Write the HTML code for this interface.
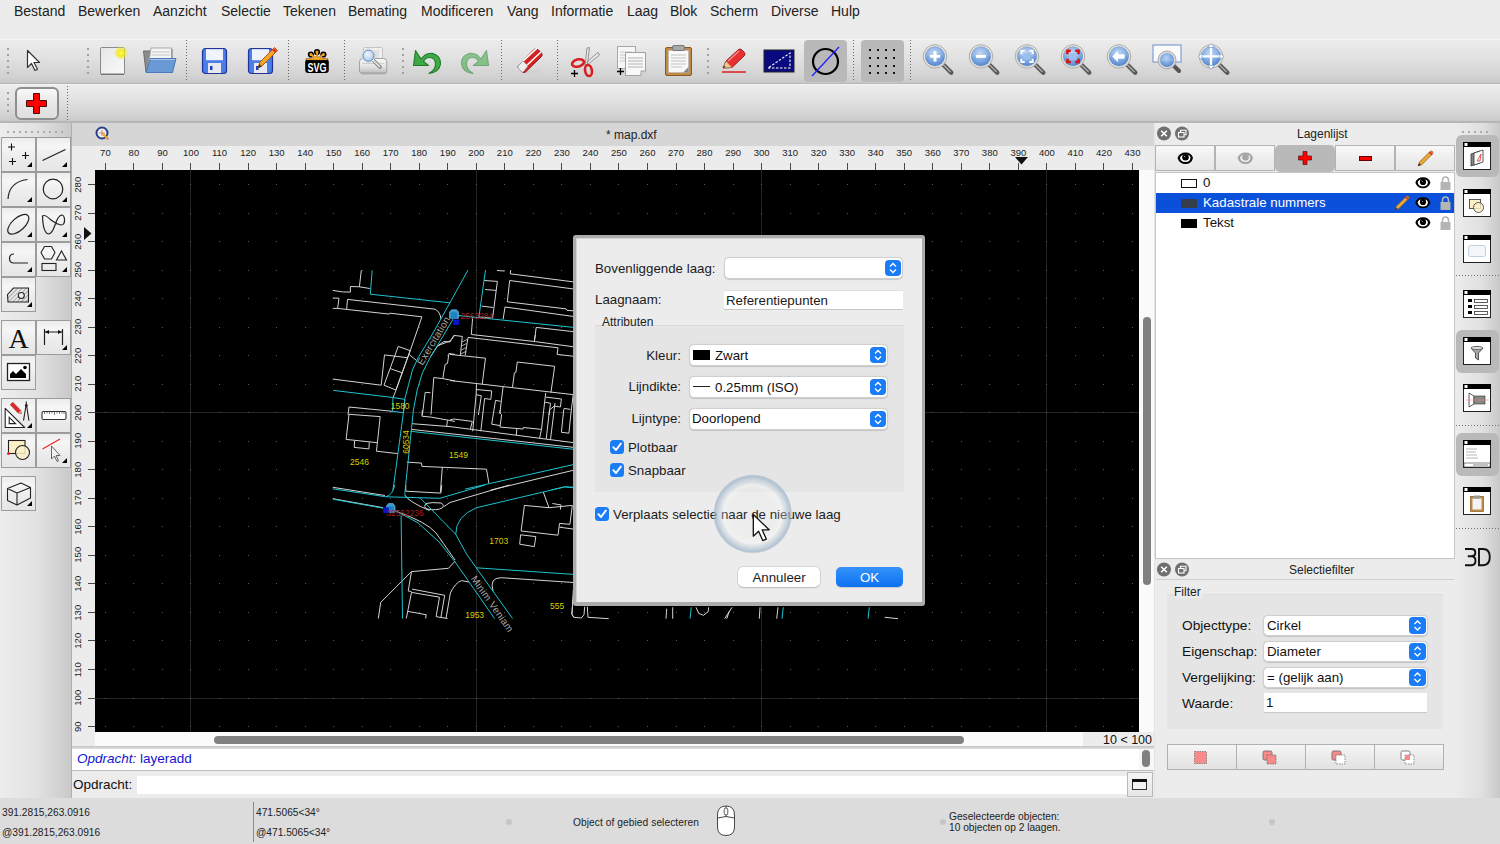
<!DOCTYPE html>
<html><head><meta charset="utf-8">
<style>
*{margin:0;padding:0;box-sizing:border-box}
html,body{width:1500px;height:844px;overflow:hidden;background:#ececec;font-family:"Liberation Sans",sans-serif;color:#1e1e1e}
.a{position:absolute}
.t{position:absolute;white-space:nowrap;line-height:1}
.rl{font-size:9.5px;color:#222}
#menu{left:0;top:0;width:1500px;height:39px;background:#ececec}
#menu .t{top:4px;font-size:14px;color:#222}
#tb1{left:0;top:39px;width:1500px;height:45px;background:linear-gradient(#ececec,#e2e2e2 40%,#d2d2d2 85%,#c8c8c8);border-top:1px solid #f6f6f6;border-bottom:1px solid #b6b6b6}
#tb2{left:0;top:84px;width:1500px;height:39px;background:linear-gradient(#ececec,#e2e2e2 40%,#d2d2d2 85%,#c8c8c8);border-top:1px solid #f4f4f4;border-bottom:2px solid #b6b6b6}
.hd{width:2px;background:linear-gradient(#a2a2a2 2px,transparent 2px) 0 0/2px 6px}
.sp{width:1px;background:linear-gradient(#6a6a6a 50%,transparent 50%) 0 0/1px 3px}
#ldock{left:0;top:123px;width:71px;height:675px;background:linear-gradient(90deg,#ededed,#e2e2e2 50%,#c9c9c9)}
.tbtn{position:absolute;width:35px;height:35px;border:1px solid #9c9c9c;background:linear-gradient(#ececec,#f6f6f6 25%,#ececec 60%,#e6e6e6)}
.tbtn svg{position:absolute;left:0;top:0}
#mdi{left:71px;top:123px;width:1084px;height:675px;background:#ececec;border-left:1px solid #b0b0b0}
#rdock{left:1154px;top:123px;width:301px;height:675px;background:#ececec;border-left:1px solid #e4e4e4}
#rtb{left:1455px;top:123px;width:45px;height:675px;background:linear-gradient(90deg,#ececec,#e0e0e0 60%,#c8c8c8)}
.lbtn{position:absolute;top:145px;width:60px;height:26px;border:1px solid #b4b4b4;background:linear-gradient(#f8f8f8,#eeeeee 50%,#e6e6e6)}
.lbl{font-size:13.7px;color:#111}
.cmb{position:absolute;background:#fff;border:1px solid #cfcfcf;border-radius:5px;box-shadow:0 0.5px 1px rgba(0,0,0,0.15)}
.cmb .t{font-size:13.3px;color:#111}
.stp{position:absolute;width:17px;height:17px;border-radius:4px;background:#1a7cf7;}
.sbtn{position:absolute;top:744px;width:70px;height:26px;border:1px solid #b0b0b0;background:linear-gradient(#f6f6f6,#ebebeb 50%,#e2e2e2)}
.st{font-size:10.2px;color:#222}
.dl{font-size:13.3px;color:#1b1b1b}
.chk{position:absolute;width:14px;height:14px;border-radius:3.5px;background:#1b7df6}
.chk svg{position:absolute;left:0;top:0}
#status{left:0;top:798px;width:1500px;height:46px;background:#dcdcdc;font-size:10px}
</style></head><body>
<div id="menu" class="a">
<span class="t" style="left:14px">Bestand</span>
<span class="t" style="left:78px">Bewerken</span>
<span class="t" style="left:153px">Aanzicht</span>
<span class="t" style="left:221px">Selectie</span>
<span class="t" style="left:283px">Tekenen</span>
<span class="t" style="left:348px">Bemating</span>
<span class="t" style="left:421px">Modificeren</span>
<span class="t" style="left:507px">Vang</span>
<span class="t" style="left:551px">Informatie</span>
<span class="t" style="left:627px">Laag</span>
<span class="t" style="left:670px">Blok</span>
<span class="t" style="left:710px">Scherm</span>
<span class="t" style="left:771px">Diverse</span>
<span class="t" style="left:831px">Hulp</span>
</div>
<div id="tb1" class="a"></div>
<div id="tb2" class="a"></div>
<!-- toolbar 1 handles/separators -->
<div class="a hd" style="left:7px;top:48px;height:26px"></div>
<div class="a hd" style="left:87px;top:48px;height:26px"></div>
<div class="a sp" style="left:186px;top:40px;height:42px"></div>
<div class="a sp" style="left:288px;top:40px;height:42px"></div>
<div class="a sp" style="left:344px;top:40px;height:42px"></div>
<div class="a hd" style="left:402px;top:48px;height:26px"></div>
<div class="a sp" style="left:501px;top:40px;height:42px"></div>
<div class="a sp" style="left:557px;top:40px;height:42px"></div>
<div class="a hd" style="left:707px;top:48px;height:26px"></div>
<div class="a sp" style="left:853px;top:40px;height:42px"></div>
<div class="a sp" style="left:910px;top:40px;height:42px"></div>
<!-- pointer -->
<svg class="a" style="left:26px;top:49px" width="16" height="24" viewBox="0 0 16 24"><path d="M1.5 1.5V18.5L5.5 14.5L9 21.5L11.5 20.3L8 13.5H13.5Z" fill="#fff" stroke="#333" stroke-width="1.2" stroke-linejoin="round"/></svg>
<!-- new doc -->
<svg class="a" style="left:98px;top:45px" width="32" height="32" viewBox="0 0 32 32"><defs><radialGradient id="glow"><stop offset="0" stop-color="#ffff60"/><stop offset="0.45" stop-color="#f2ea20"/><stop offset="1" stop-color="#f2ea20" stop-opacity="0"/></radialGradient><linearGradient id="pg" x1="0" x2="1" y1="0" y2="1"><stop offset="0" stop-color="#e6e6e6"/><stop offset="1" stop-color="#fafafa"/></linearGradient></defs><rect x="2.5" y="2.5" width="24" height="27" rx="1" fill="url(#pg)" stroke="#8a8a8a"/><rect x="3" y="28.5" width="23" height="1.5" fill="#777"/><circle cx="23" cy="8" r="7" fill="url(#glow)"/></svg>
<!-- open folder -->
<svg class="a" style="left:142px;top:46px" width="36" height="30" viewBox="0 0 36 30"><path d="M1.5 5H10L11.5 3H30V26H4Z" fill="#8c8c8c" stroke="#6a6a6a"/><path d="M9 2H29.5V22H6Z" fill="#f4f4f4" stroke="#999" stroke-width="0.8"/><path d="M10 6H28M9.5 9H28" stroke="#bbb" stroke-width="0.8"/><path d="M4 26.5L8.5 12.5H34L30.5 26.5Z" fill="#6a9ad6" stroke="#4a78b8"/><path d="M8.5 13.5H33" stroke="#a9c6ec" stroke-width="1"/></svg>
<!-- save -->
<svg class="a" style="left:201px;top:47px" width="28" height="28" viewBox="0 0 28 28"><rect x="1.5" y="1.5" width="24" height="25" rx="3" fill="#4a7ee8" stroke="#23339a" stroke-width="1.2"/><rect x="5" y="2.2" width="17" height="11" fill="#eef2fb"/><path d="M6 3L21 12" stroke="#fff" stroke-width="2" opacity="0.6"/><rect x="7" y="16" width="13" height="10" fill="#e8e8ee"/><rect x="9" y="19" width="2.5" height="4" fill="#1c3fc0"/></svg>
<!-- save as -->
<svg class="a" style="left:247px;top:45px" width="32" height="30" viewBox="0 0 32 30"><rect x="1.5" y="3.5" width="24" height="25" rx="3" fill="#4a7ee8" stroke="#23339a" stroke-width="1.2"/><rect x="5" y="4.2" width="17" height="11" fill="#eef2fb"/><rect x="7" y="18" width="13" height="10" fill="#e8e8ee"/><rect x="9" y="21" width="2.5" height="4" fill="#1c3fc0"/><path d="M11 23L13 17L27.5 2.5L30.5 5.5L16 20Z" fill="#f5a623" stroke="#b5541a" stroke-width="1"/><path d="M26 4L29 7" stroke="#e03030" stroke-width="2.5"/><path d="M11 23L12.3 19L15 21.7Z" fill="#333"/></svg>
<!-- SVG -->
<svg class="a" style="left:304px;top:48px" width="27" height="27" viewBox="0 0 27 27"><g stroke="#000" stroke-width="1.6" stroke-linecap="round"><path d="M13 11V4M13 11L6.9 6.5M13 11L19.4 6.5M2.5 11.3H23.5"/><circle cx="13" cy="4" r="2.3" fill="#f5a623"/><circle cx="6.9" cy="6.5" r="2.3" fill="#f5a623"/><circle cx="19.4" cy="6.5" r="2.3" fill="#f5a623"/></g><g stroke="#f5a623" stroke-width="1.6" stroke-linecap="round"><path d="M13 11V4M13 11L6.9 6.5M13 11L19.4 6.5M3 11.3H23"/></g><path d="M4 12Q13 7 22 12Z" fill="#f5a623"/><rect x="1.2" y="11.2" width="23.6" height="13.8" rx="3" fill="#000"/><path d="M2.5 11.6H23.5" stroke="#f5a623" stroke-width="1"/><text x="3.6" y="23.6" font-family="Liberation Sans" font-weight="bold" font-size="12.5" fill="#fff" textLength="19" lengthAdjust="spacingAndGlyphs">SVG</text></svg>
<!-- print preview -->
<svg class="a" style="left:358px;top:45px" width="31" height="31" viewBox="0 0 31 31"><defs><linearGradient id="prb" x1="0" x2="0" y1="0" y2="1"><stop offset="0" stop-color="#fafafa"/><stop offset="0.6" stop-color="#e0e0e0"/><stop offset="1" stop-color="#bdbdbd"/></linearGradient><radialGradient id="lens" cx="0.4" cy="0.35" r="0.7"><stop offset="0" stop-color="#eef4fc"/><stop offset="0.7" stop-color="#c4d6ee"/><stop offset="1" stop-color="#a8c0e0"/></radialGradient></defs><rect x="5.5" y="2.5" width="19" height="13" rx="1" fill="#efefef" stroke="#c4c4c4"/><rect x="9" y="5" width="12" height="8" fill="#e0e0e0"/><path d="M1.5 17Q1.5 13.5 5 13.5H25.5Q28.8 13.5 28.8 17V26Q28.8 28 26.8 28H3.5Q1.5 28 1.5 26Z" fill="url(#prb)" stroke="#9a9a9a" stroke-width="0.9"/><path d="M4 18.5H26" stroke="#c8c8c8" stroke-width="0.8"/><rect x="3" y="28" width="25" height="1.6" fill="#999" opacity="0.5"/><path d="M15 15L22 22" stroke="#7a7a7a" stroke-width="3.6" stroke-linecap="round"/><path d="M15.3 15.3L21.7 21.7" stroke="#e4e4e4" stroke-width="1.8" stroke-linecap="round"/><circle cx="10.5" cy="10.7" r="6.8" fill="#f6f6f6" stroke="#c8c8c8" stroke-width="0.6"/><circle cx="10.5" cy="10.7" r="5.5" fill="url(#lens)" stroke="#4a86d0" stroke-width="1"/></svg>
<!-- undo -->
<svg class="a" style="left:412px;top:47px" width="32" height="28" viewBox="0 0 32 28"><path d="M9 12Q14 5 21 6.5Q29 9 28.5 17Q27.5 25 17 26.5Q24 22.5 23.5 16.5Q23 10.5 17 10.5Q13.5 10.5 11.5 14.5L16.5 18.5H1.5L3.5 3.5Z" fill="#3faa45" stroke="#1e7a2a" stroke-width="1.1" stroke-linejoin="round"/></svg>
<!-- redo -->
<svg class="a" style="left:458px;top:47px" width="32" height="28" viewBox="0 0 32 28" opacity="0.55"><path d="M23 12Q18 5 11 6.5Q3 9 3.5 17Q4.5 25 15 26.5Q8 22.5 8.5 16.5Q9 10.5 15 10.5Q18.5 10.5 20.5 14.5L15.5 18.5H30.5L28.5 3.5Z" fill="#3faa45" stroke="#1e7a2a" stroke-width="1.1" stroke-linejoin="round"/></svg>
<!-- eraser -->
<svg class="a" style="left:515px;top:46px" width="30" height="30" viewBox="0 0 30 30"><ellipse cx="14" cy="25.5" rx="11" ry="1.6" fill="#d0d0d0"/><path d="M3 20L19 3.5Q21 2 23 3.5L26.5 7Q28 9 26.5 10.5L10.5 26Q9 27 7.5 26L3.5 22Q2.5 21 3 20Z" fill="#d42222" stroke="#8a1010" stroke-width="0.9"/><path d="M6 17L22 2.2M10 21L26 6" stroke="#fff" stroke-width="1.6"/><path d="M3 20L8 15L13 20L8.5 25.5Q8 26.5 7 26L3.5 22.5Q2.5 21 3 20Z" fill="#eee" stroke="#999" stroke-width="0.8"/></svg>
<!-- scissors -->
<svg class="a" style="left:570px;top:45px" width="32" height="33" viewBox="0 0 32 33"><path d="M15 21L17 3L19.5 2.5L17.5 19ZM14.5 19L28 7.5L29.5 10L17 20Z" fill="#eaeaea" stroke="#888" stroke-width="0.9"/><ellipse cx="8" cy="18" rx="6" ry="3.6" fill="none" stroke="#d82020" stroke-width="2.6" transform="rotate(-15 8 18)"/><ellipse cx="18.5" cy="25.5" rx="3.4" ry="5.6" fill="none" stroke="#d82020" stroke-width="2.6" transform="rotate(-10 18.5 25.5)"/><path d="M1 28.5H8M4.5 25V32" stroke="#000" stroke-width="1.3"/></svg>
<!-- copy -->
<svg class="a" style="left:616px;top:45px" width="32" height="33" viewBox="0 0 32 33"><rect x="1.5" y="1.5" width="18" height="22" fill="#f6f6f6" stroke="#a8a8a8"/><path d="M4 7H16M4 10H16M4 13H16M4 16H16" stroke="#bbb" stroke-width="0.8"/><path d="M9.5 7.5H29.5V26L25 30.5H9.5Z" fill="#f8f8f8" stroke="#a0a0a0"/><path d="M12 13H27M12 16H27M12 19H27M12 22H27" stroke="#aaa" stroke-width="0.9"/><path d="M25 30.5V26H29.5" fill="#ddd" stroke="#a0a0a0"/><path d="M1 26.5H8M4.5 23V30" stroke="#000" stroke-width="1.3"/></svg>
<!-- paste -->
<svg class="a" style="left:664px;top:44px" width="29" height="33" viewBox="0 0 29 33"><rect x="1.5" y="3.5" width="26" height="28" rx="1.5" fill="#c08a48" stroke="#8a5a20"/><rect x="4.5" y="6.5" width="20" height="22" fill="#f8f8f8" stroke="#bbb" stroke-width="0.6"/><path d="M7 11H22M7 14H22M7 17H22M7 20H22M7 23H18" stroke="#bbb" stroke-width="0.9"/><path d="M19 28.5L24.5 23V28.5Z" fill="#888"/><rect x="8.5" y="1.5" width="12" height="5" rx="1.5" fill="#a8a8a8" stroke="#777"/></svg>
<!-- pencil -->
<svg class="a" style="left:720px;top:48px" width="27" height="26" viewBox="0 0 27 26"><path d="M3 20L6 13L18.5 1.5Q20 0.5 21.5 1.5L24.5 4.5Q25.5 6 24.5 7.5L12 19.5Z" fill="#e83030" stroke="#901818" stroke-width="0.9"/><path d="M6 13L12 19.5L3 20Z" fill="#f0c890" stroke="#a07040" stroke-width="0.6"/><path d="M3 20L4 17.5L5.5 19Z" fill="#333"/><path d="M8 13L19 3" stroke="#ff9090" stroke-width="1.3"/><path d="M2 24H26" stroke="#e01010" stroke-width="1.4"/></svg>
<!-- blue rect -->
<svg class="a" style="left:763px;top:49px" width="32" height="24" viewBox="0 0 32 24"><rect x="1" y="1" width="30" height="22" fill="#0a0a80" stroke="#222"/><path d="M5 19H27V4Z" fill="none" stroke="#fff" stroke-width="1.1" stroke-dasharray="2.5 1.5"/></svg>
<!-- highlighted buttons -->
<div class="a" style="left:804px;top:40px;width:43px;height:42px;background:#b9b9b9;border-radius:4px"></div>
<svg class="a" style="left:809px;top:45px" width="33" height="33" viewBox="0 0 33 33"><circle cx="16.5" cy="16.5" r="12.5" fill="none" stroke="#000" stroke-width="2.2"/><path d="M3 31L30 2" stroke="#2020ff" stroke-width="1.3"/></svg>
<div class="a" style="left:861px;top:40px;width:43px;height:42px;background:#b9b9b9;border-radius:4px"></div>
<svg class="a" style="left:867px;top:47px" width="30" height="28" viewBox="0 0 30 28"><g fill="#111"><rect x="2" y="2" width="2" height="2"/><rect x="10" y="2" width="2" height="2"/><rect x="18" y="2" width="2" height="2"/><rect x="26" y="2" width="2" height="2"/><rect x="2" y="10" width="2" height="2"/><rect x="10" y="10" width="2" height="2"/><rect x="18" y="10" width="2" height="2"/><rect x="26" y="10" width="2" height="2"/><rect x="2" y="18" width="2" height="2"/><rect x="10" y="18" width="2" height="2"/><rect x="18" y="18" width="2" height="2"/><rect x="26" y="18" width="2" height="2"/><rect x="2" y="25" width="2" height="2"/><rect x="10" y="25" width="2" height="2"/><rect x="18" y="25" width="2" height="2"/><rect x="26" y="25" width="2" height="2"/></g></svg>
<!-- zoom icons -->
<svg width="0" height="0" style="position:absolute"><defs><radialGradient id="zg" cx="0.45" cy="0.35" r="0.7"><stop offset="0" stop-color="#bcd4f4"/><stop offset="0.6" stop-color="#78a4e0"/><stop offset="1" stop-color="#4f7fc8"/></radialGradient>
<g id="zbase"><path d="M18 18L26.5 26.5" stroke="#5a5a5a" stroke-width="4" stroke-linecap="round"/><path d="M19 19L25.5 25.5" stroke="#a8a8a8" stroke-width="1.4" stroke-linecap="round"/><circle cx="12" cy="12" r="10.5" fill="#e4e4de" stroke="#a8a8a0" stroke-width="0.8"/><circle cx="12" cy="12" r="8.6" fill="url(#zg)" stroke="#6a90c8" stroke-width="0.5"/><path d="M3.6 12A8.4 8.4 0 0 1 20.4 12Z" fill="#fff" opacity="0.12"/></g></defs></svg>
<svg class="a" style="left:922px;top:45px;overflow:visible" width="32" height="32" viewBox="0 0 32 32"><g transform="translate(-0.44,-2.04) scale(1.12)"><use href="#zbase"/><path d="M12 7.5V16.5M7.5 12H16.5" stroke="#fff" stroke-width="2.6"/></g></svg>
<svg class="a" style="left:968px;top:45px;overflow:visible" width="32" height="32" viewBox="0 0 32 32"><g transform="translate(-0.44,-2.04) scale(1.12)"><use href="#zbase"/><path d="M7.5 12H16.5" stroke="#fff" stroke-width="2.6"/></g></svg>
<svg class="a" style="left:1014px;top:45px;overflow:visible" width="32" height="32" viewBox="0 0 32 32"><g transform="translate(-0.44,-2.04) scale(1.12)"><use href="#zbase"/><rect x="9" y="9" width="6" height="6" fill="#9cc0ee"/><path d="M7 10V7H10M14 7H17V10M17 14V17H14M10 17H7V14" stroke="#fff" stroke-width="1.8" fill="none"/></g></svg>
<svg class="a" style="left:1060px;top:45px;overflow:visible" width="32" height="32" viewBox="0 0 32 32"><g transform="translate(-0.44,-2.04) scale(1.12)"><use href="#zbase"/><rect x="9" y="9" width="6" height="6" fill="#9cc0ee"/><path d="M7 10V7H10M14 7H17V10M17 14V17H14M10 17H7V14" stroke="#e01010" stroke-width="2.2" fill="none"/></g></svg>
<svg class="a" style="left:1106px;top:45px;overflow:visible" width="32" height="32" viewBox="0 0 32 32"><g transform="translate(-0.44,-2.04) scale(1.12)"><use href="#zbase"/><path d="M6 12L11 7V10H17V14H11V17Z" fill="#fff"/></g></svg>
<svg class="a" style="left:1152px;top:44px" width="32" height="31" viewBox="0 0 32 31"><rect x="1" y="1" width="28" height="17" fill="#fafafa" stroke="#6a90d0"/><path d="M20 20L27 27" stroke="#555" stroke-width="4" stroke-linecap="round"/><circle cx="15" cy="16" r="9" fill="#d8d8d8" stroke="#aaa"/><circle cx="15" cy="16" r="7" fill="url(#zg)"/><path d="M8.5 16H21.5" stroke="#a8c4ec" stroke-width="1"/></svg>
<svg class="a" style="left:1198px;top:45px;overflow:visible" width="32" height="32" viewBox="0 0 32 32"><g transform="translate(-0.44,-2.04) scale(1.12)"><use href="#zbase"/><path d="M12 2V22M2 12H22" stroke="#fff" stroke-width="2"/><path d="M12 0.5L9 4H15ZM12 23.5L9 20H15ZM0.5 12L4 9V15ZM23.5 12L20 9V15Z" fill="#fff" stroke="#6a90d0" stroke-width="0.6"/></g></svg>
<!-- toolbar 2 -->
<div class="a hd" style="left:7px;top:92px;height:20px"></div>
<div class="a" style="left:15px;top:87px;width:44px;height:33px;border:2px solid #8e8e8e;border-radius:6px;background:linear-gradient(#f8f8f8,#e8e8e8 50%,#dedede)"></div>
<svg class="a" style="left:25px;top:92px" width="23" height="23" viewBox="0 0 23 23"><path d="M8.5 1.5H14.5V8.5H21.5V14.5H14.5V21.5H8.5V14.5H1.5V8.5H8.5Z" fill="#f00" stroke="#300" stroke-width="0.9"/></svg>
<div class="a sp" style="left:67px;top:86px;height:34px"></div>

<div id="ldock" class="a"></div>
<div class="a" style="left:7px;top:131px;width:58px;height:2px;background:linear-gradient(90deg,#acacac 2px,transparent 2px) 0 0/6px 2px"></div>
<!-- group 1 -->
<div class="tbtn" style="left:1px;top:137px"><svg width="33" height="33"><path d="M6 9H13M9.5 5.5V12.5M20 17.5H27M23.5 14V21M7 23.5H14M10.5 20V27" stroke="#111" stroke-width="1.1"/><path d="M25 29H30V24Z" fill="#000"/></svg></div>
<div class="tbtn" style="left:36px;top:137px"><svg width="33" height="33"><path d="M5.5 22.5L28.5 11.5" stroke="#222" stroke-width="1.2"/><path d="M25 29H30V24Z" fill="#000"/></svg></div>
<div class="tbtn" style="left:1px;top:172px"><svg width="33" height="33"><path d="M6 26Q7 9 25.5 6.5" fill="none" stroke="#222" stroke-width="1.2"/><path d="M25 29H30V24Z" fill="#000"/></svg></div>
<div class="tbtn" style="left:36px;top:172px"><svg width="33" height="33"><circle cx="16" cy="16" r="9.8" fill="none" stroke="#222" stroke-width="1.2"/><path d="M25 29H30V24Z" fill="#000"/></svg></div>
<div class="tbtn" style="left:1px;top:207px"><svg width="33" height="33"><ellipse cx="16.3" cy="16.3" rx="13" ry="6.3" transform="rotate(-42 16.3 16.3)" fill="none" stroke="#222" stroke-width="1.2"/><path d="M25 29H30V24Z" fill="#000"/></svg></div>
<div class="tbtn" style="left:36px;top:207px"><svg width="33" height="33"><path d="M5.5 8Q6 25 11.5 26Q15 26 18 17Q21 8 24.5 7Q27 7 27.5 11Q28 17 24 17Q19 16 14 12Q8 6 5.5 8Z" fill="none" stroke="#222" stroke-width="1.2"/><path d="M25 29H30V24Z" fill="#000"/></svg></div>
<div class="tbtn" style="left:1px;top:242px"><svg width="33" height="33"><path d="M12 11Q7.5 11 7.5 15.5Q7.5 20 12 20H26" fill="none" stroke="#222" stroke-width="1.2"/><path d="M25 29H30V24Z" fill="#000"/></svg></div>
<div class="tbtn" style="left:36px;top:242px"><svg width="33" height="33"><path d="M7.5 3.5H14.5L18 9.5L14.5 16H7.5L4 9.5Z" fill="none" stroke="#222" stroke-width="1.1"/><path d="M24.5 8L29.5 17H19.5Z" fill="none" stroke="#222" stroke-width="1.1"/><rect x="5" y="20.5" width="14" height="7" fill="none" stroke="#222" stroke-width="1.1"/><path d="M25 29H30V24Z" fill="#000"/></svg></div>
<div class="tbtn" style="left:1px;top:277px"><svg width="33" height="33"><defs><pattern id="hatch" width="3" height="3" patternUnits="userSpaceOnUse" patternTransform="rotate(45)"><rect width="3" height="3" fill="#e8e8e8"/><path d="M0 0V3" stroke="#666" stroke-width="1"/></pattern></defs><path d="M5.5 16.5L11.5 10H26.5V24H6Z" fill="url(#hatch)" stroke="#222" stroke-width="1.1"/><circle cx="19.3" cy="17.5" r="3" fill="#eee" stroke="#222" stroke-width="1.1"/><path d="M25 29H30V24Z" fill="#000"/></svg></div>
<!-- group 2 -->
<div class="tbtn" style="left:1px;top:320px"><svg width="33" height="33"><text x="16.5" y="26.5" font-family="Liberation Serif" font-size="28" text-anchor="middle" fill="#111">A</text></svg></div>
<div class="tbtn" style="left:36px;top:320px"><svg width="33" height="33"><path d="M7.5 8V24M25.5 8V24M8 11H25" stroke="#222" stroke-width="1.2"/><path d="M8 11L12 9V13ZM25 11L21 9V13Z" fill="#111"/><path d="M25 29H30V24Z" fill="#000"/></svg></div>
<div class="tbtn" style="left:1px;top:355px"><svg width="33" height="33"><rect x="5.5" y="7.5" width="22" height="17" fill="#fff" stroke="#222" stroke-width="1.3"/><path d="M8 22V18L11 15L14 18L19 13L24 18V22Z" fill="#000"/><circle cx="23" cy="11.5" r="1.8" fill="#000"/></svg></div>
<!-- group 3 -->
<div class="tbtn" style="left:1px;top:398px"><svg width="33" height="33"><path d="M3.2 9.3V28.5H22.6Z" fill="#fff" stroke="#222" stroke-width="1.1" stroke-linejoin="round"/><path d="M7.2 18.3V24.6H13.6Z" fill="none" stroke="#222" stroke-width="1.1"/><path d="M8.2 5.8L10.8 3.2L18.8 11.4L19.4 14.9L16.1 14Z" fill="#e02828" stroke="#902020" stroke-width="0.5"/><path d="M16.1 14L18.8 11.4L19.4 14.9Z" fill="#d8a878"/><path d="M24.3 2.5V5.5M24 6.5L21.5 21.7M24.6 6.5L26.9 21.7" stroke="#222" stroke-width="1.1"/><circle cx="24.3" cy="6.5" r="1.4" fill="#222"/><path d="M25 29H30V24Z" fill="#000"/></svg></div>
<div class="tbtn" style="left:36px;top:398px"><svg width="33" height="33"><rect x="5" y="12.5" width="24" height="8" rx="1.5" fill="#fff" stroke="#333" stroke-width="1.1"/><path d="M7.5 13V15M10 13V14.5M12.5 13V15M15 13V14.5M17.5 13V16M20 13V14.5M22.5 13V15M25 13V14.5M27 13V15" stroke="#444" stroke-width="0.7"/></svg></div>
<div class="tbtn" style="left:1px;top:433px"><svg width="33" height="33"><rect x="6.5" y="6.5" width="16.5" height="13" fill="#fdf0c8" stroke="#222" stroke-width="1.1"/><circle cx="20.5" cy="18.5" r="7" fill="#fdf0c8" fill-opacity="0.85" stroke="#222" stroke-width="1.1"/><circle cx="6.5" cy="19.5" r="1.5" fill="#f02020"/></svg></div>
<div class="tbtn" style="left:36px;top:433px"><svg width="33" height="33"><path d="M5.5 15L23 5" stroke="#f02828" stroke-width="1.3"/><path d="M14.5 12V25L17.5 22L20 27.5L21.5 26.8L19.2 21.5H23Z" fill="#f4f4f4" stroke="#555" stroke-width="0.9"/><path d="M25 29H30V24Z" fill="#000"/></svg></div>
<!-- group 4 -->
<div class="tbtn" style="left:1px;top:476px"><svg width="33" height="33"><path d="M5.5 11.5L19 6L28.5 10.5V21L15 28L5.5 23.5ZM5.5 11.5L15 16V28M15 16L28.5 10.5" fill="none" stroke="#222" stroke-width="1.1" stroke-linejoin="round"/><path d="M25 29H30V24Z" fill="#000"/></svg></div>

<div id="mdi" class="a"></div>
<!-- MDI title bar -->
<div class="a" style="left:72px;top:123px;width:1082px;height:23px;background:#d6d6d6"></div>
<svg class="a" style="left:95px;top:126px" width="15" height="15" viewBox="0 0 15 15"><circle cx="7" cy="7" r="5.5" fill="#f0f0f0" stroke="#2a3f8a" stroke-width="2"/><path d="M4 7h6M7 4v6" stroke="#c55" stroke-width="0.7"/><path d="M7.5 7.5l5 5" stroke="#e8b020" stroke-width="2.2"/><path d="M12 12l1.5 1.5" stroke="#d66" stroke-width="1.5"/></svg>
<span class="t" style="left:606px;top:129px;font-size:12px;color:#222">* map.dxf</span>
<!-- rulers -->
<div class="a" style="left:72px;top:146px;width:1082px;height:24px;background:#ececec"></div>
<div class="a" style="left:72px;top:170px;width:23px;height:576px;background:#ececec"></div>
<span class="t rl" style="left:90.4px;top:148px;width:30px;text-align:center">70</span>
<div class="a" style="left:105px;top:163px;width:1px;height:7px;background:#4a4a4a"></div>
<span class="t rl" style="left:118.9px;top:148px;width:30px;text-align:center">80</span>
<div class="a" style="left:133px;top:163px;width:1px;height:7px;background:#4a4a4a"></div>
<span class="t rl" style="left:147.5px;top:148px;width:30px;text-align:center">90</span>
<div class="a" style="left:162px;top:163px;width:1px;height:7px;background:#4a4a4a"></div>
<span class="t rl" style="left:176.0px;top:148px;width:30px;text-align:center">100</span>
<div class="a" style="left:190px;top:163px;width:1px;height:7px;background:#4a4a4a"></div>
<span class="t rl" style="left:204.5px;top:148px;width:30px;text-align:center">110</span>
<div class="a" style="left:219px;top:163px;width:1px;height:7px;background:#4a4a4a"></div>
<span class="t rl" style="left:233.1px;top:148px;width:30px;text-align:center">120</span>
<div class="a" style="left:248px;top:163px;width:1px;height:7px;background:#4a4a4a"></div>
<span class="t rl" style="left:261.6px;top:148px;width:30px;text-align:center">130</span>
<div class="a" style="left:276px;top:163px;width:1px;height:7px;background:#4a4a4a"></div>
<span class="t rl" style="left:290.1px;top:148px;width:30px;text-align:center">140</span>
<div class="a" style="left:305px;top:163px;width:1px;height:7px;background:#4a4a4a"></div>
<span class="t rl" style="left:318.6px;top:148px;width:30px;text-align:center">150</span>
<div class="a" style="left:333px;top:163px;width:1px;height:7px;background:#4a4a4a"></div>
<span class="t rl" style="left:347.2px;top:148px;width:30px;text-align:center">160</span>
<div class="a" style="left:362px;top:163px;width:1px;height:7px;background:#4a4a4a"></div>
<span class="t rl" style="left:375.7px;top:148px;width:30px;text-align:center">170</span>
<div class="a" style="left:390px;top:163px;width:1px;height:7px;background:#4a4a4a"></div>
<span class="t rl" style="left:404.2px;top:148px;width:30px;text-align:center">180</span>
<div class="a" style="left:419px;top:163px;width:1px;height:7px;background:#4a4a4a"></div>
<span class="t rl" style="left:432.8px;top:148px;width:30px;text-align:center">190</span>
<div class="a" style="left:447px;top:163px;width:1px;height:7px;background:#4a4a4a"></div>
<span class="t rl" style="left:461.3px;top:148px;width:30px;text-align:center">200</span>
<div class="a" style="left:476px;top:163px;width:1px;height:7px;background:#4a4a4a"></div>
<span class="t rl" style="left:489.8px;top:148px;width:30px;text-align:center">210</span>
<div class="a" style="left:504px;top:163px;width:1px;height:7px;background:#4a4a4a"></div>
<span class="t rl" style="left:518.4px;top:148px;width:30px;text-align:center">220</span>
<div class="a" style="left:533px;top:163px;width:1px;height:7px;background:#4a4a4a"></div>
<span class="t rl" style="left:546.9px;top:148px;width:30px;text-align:center">230</span>
<div class="a" style="left:561px;top:163px;width:1px;height:7px;background:#4a4a4a"></div>
<span class="t rl" style="left:575.4px;top:148px;width:30px;text-align:center">240</span>
<div class="a" style="left:590px;top:163px;width:1px;height:7px;background:#4a4a4a"></div>
<span class="t rl" style="left:603.9px;top:148px;width:30px;text-align:center">250</span>
<div class="a" style="left:618px;top:163px;width:1px;height:7px;background:#4a4a4a"></div>
<span class="t rl" style="left:632.5px;top:148px;width:30px;text-align:center">260</span>
<div class="a" style="left:647px;top:163px;width:1px;height:7px;background:#4a4a4a"></div>
<span class="t rl" style="left:661.0px;top:148px;width:30px;text-align:center">270</span>
<div class="a" style="left:676px;top:163px;width:1px;height:7px;background:#4a4a4a"></div>
<span class="t rl" style="left:689.5px;top:148px;width:30px;text-align:center">280</span>
<div class="a" style="left:704px;top:163px;width:1px;height:7px;background:#4a4a4a"></div>
<span class="t rl" style="left:718.1px;top:148px;width:30px;text-align:center">290</span>
<div class="a" style="left:733px;top:163px;width:1px;height:7px;background:#4a4a4a"></div>
<span class="t rl" style="left:746.6px;top:148px;width:30px;text-align:center">300</span>
<div class="a" style="left:761px;top:163px;width:1px;height:7px;background:#4a4a4a"></div>
<span class="t rl" style="left:775.1px;top:148px;width:30px;text-align:center">310</span>
<div class="a" style="left:790px;top:163px;width:1px;height:7px;background:#4a4a4a"></div>
<span class="t rl" style="left:803.6px;top:148px;width:30px;text-align:center">320</span>
<div class="a" style="left:818px;top:163px;width:1px;height:7px;background:#4a4a4a"></div>
<span class="t rl" style="left:832.2px;top:148px;width:30px;text-align:center">330</span>
<div class="a" style="left:847px;top:163px;width:1px;height:7px;background:#4a4a4a"></div>
<span class="t rl" style="left:860.7px;top:148px;width:30px;text-align:center">340</span>
<div class="a" style="left:875px;top:163px;width:1px;height:7px;background:#4a4a4a"></div>
<span class="t rl" style="left:889.2px;top:148px;width:30px;text-align:center">350</span>
<div class="a" style="left:904px;top:163px;width:1px;height:7px;background:#4a4a4a"></div>
<span class="t rl" style="left:917.8px;top:148px;width:30px;text-align:center">360</span>
<div class="a" style="left:932px;top:163px;width:1px;height:7px;background:#4a4a4a"></div>
<span class="t rl" style="left:946.3px;top:148px;width:30px;text-align:center">370</span>
<div class="a" style="left:961px;top:163px;width:1px;height:7px;background:#4a4a4a"></div>
<span class="t rl" style="left:974.8px;top:148px;width:30px;text-align:center">380</span>
<div class="a" style="left:989px;top:163px;width:1px;height:7px;background:#4a4a4a"></div>
<span class="t rl" style="left:1003.4px;top:148px;width:30px;text-align:center">390</span>
<div class="a" style="left:1018px;top:163px;width:1px;height:7px;background:#4a4a4a"></div>
<span class="t rl" style="left:1031.9px;top:148px;width:30px;text-align:center">400</span>
<div class="a" style="left:1046px;top:163px;width:1px;height:7px;background:#4a4a4a"></div>
<span class="t rl" style="left:1060.4px;top:148px;width:30px;text-align:center">410</span>
<div class="a" style="left:1075px;top:163px;width:1px;height:7px;background:#4a4a4a"></div>
<span class="t rl" style="left:1089.0px;top:148px;width:30px;text-align:center">420</span>
<div class="a" style="left:1103px;top:163px;width:1px;height:7px;background:#4a4a4a"></div>
<span class="t rl" style="left:1117.5px;top:148px;width:30px;text-align:center">430</span>
<div class="a" style="left:1132px;top:163px;width:1px;height:7px;background:#4a4a4a"></div>
<span class="t rl" style="left:63px;top:721.6px;width:30px;text-align:center;transform:rotate(-90deg)">90</span>
<div class="a" style="left:88px;top:726px;width:7px;height:1px;background:#4a4a4a"></div>
<span class="t rl" style="left:63px;top:693.0px;width:30px;text-align:center;transform:rotate(-90deg)">100</span>
<div class="a" style="left:88px;top:698px;width:7px;height:1px;background:#4a4a4a"></div>
<span class="t rl" style="left:63px;top:664.5px;width:30px;text-align:center;transform:rotate(-90deg)">110</span>
<div class="a" style="left:88px;top:669px;width:7px;height:1px;background:#4a4a4a"></div>
<span class="t rl" style="left:63px;top:636.0px;width:30px;text-align:center;transform:rotate(-90deg)">120</span>
<div class="a" style="left:88px;top:640px;width:7px;height:1px;background:#4a4a4a"></div>
<span class="t rl" style="left:63px;top:607.5px;width:30px;text-align:center;transform:rotate(-90deg)">130</span>
<div class="a" style="left:88px;top:612px;width:7px;height:1px;background:#4a4a4a"></div>
<span class="t rl" style="left:63px;top:578.9px;width:30px;text-align:center;transform:rotate(-90deg)">140</span>
<div class="a" style="left:88px;top:583px;width:7px;height:1px;background:#4a4a4a"></div>
<span class="t rl" style="left:63px;top:550.4px;width:30px;text-align:center;transform:rotate(-90deg)">150</span>
<div class="a" style="left:88px;top:555px;width:7px;height:1px;background:#4a4a4a"></div>
<span class="t rl" style="left:63px;top:521.9px;width:30px;text-align:center;transform:rotate(-90deg)">160</span>
<div class="a" style="left:88px;top:526px;width:7px;height:1px;background:#4a4a4a"></div>
<span class="t rl" style="left:63px;top:493.3px;width:30px;text-align:center;transform:rotate(-90deg)">170</span>
<div class="a" style="left:88px;top:498px;width:7px;height:1px;background:#4a4a4a"></div>
<span class="t rl" style="left:63px;top:464.8px;width:30px;text-align:center;transform:rotate(-90deg)">180</span>
<div class="a" style="left:88px;top:469px;width:7px;height:1px;background:#4a4a4a"></div>
<span class="t rl" style="left:63px;top:436.3px;width:30px;text-align:center;transform:rotate(-90deg)">190</span>
<div class="a" style="left:88px;top:441px;width:7px;height:1px;background:#4a4a4a"></div>
<span class="t rl" style="left:63px;top:407.7px;width:30px;text-align:center;transform:rotate(-90deg)">200</span>
<div class="a" style="left:88px;top:412px;width:7px;height:1px;background:#4a4a4a"></div>
<span class="t rl" style="left:63px;top:379.2px;width:30px;text-align:center;transform:rotate(-90deg)">210</span>
<div class="a" style="left:88px;top:384px;width:7px;height:1px;background:#4a4a4a"></div>
<span class="t rl" style="left:63px;top:350.7px;width:30px;text-align:center;transform:rotate(-90deg)">220</span>
<div class="a" style="left:88px;top:355px;width:7px;height:1px;background:#4a4a4a"></div>
<span class="t rl" style="left:63px;top:322.1px;width:30px;text-align:center;transform:rotate(-90deg)">230</span>
<div class="a" style="left:88px;top:327px;width:7px;height:1px;background:#4a4a4a"></div>
<span class="t rl" style="left:63px;top:293.6px;width:30px;text-align:center;transform:rotate(-90deg)">240</span>
<div class="a" style="left:88px;top:298px;width:7px;height:1px;background:#4a4a4a"></div>
<span class="t rl" style="left:63px;top:265.1px;width:30px;text-align:center;transform:rotate(-90deg)">250</span>
<div class="a" style="left:88px;top:270px;width:7px;height:1px;background:#4a4a4a"></div>
<span class="t rl" style="left:63px;top:236.6px;width:30px;text-align:center;transform:rotate(-90deg)">260</span>
<div class="a" style="left:88px;top:241px;width:7px;height:1px;background:#4a4a4a"></div>
<span class="t rl" style="left:63px;top:208.0px;width:30px;text-align:center;transform:rotate(-90deg)">270</span>
<div class="a" style="left:88px;top:213px;width:7px;height:1px;background:#4a4a4a"></div>
<span class="t rl" style="left:63px;top:179.5px;width:30px;text-align:center;transform:rotate(-90deg)">280</span>
<div class="a" style="left:88px;top:184px;width:7px;height:1px;background:#4a4a4a"></div>
<svg class="a" style="left:1015px;top:157px" width="13" height="8"><path d="M0 0H13L6.5 7.5Z" fill="#111"/></svg>
<svg class="a" style="left:84px;top:227px" width="8" height="13"><path d="M0 0V13L7.5 6.5Z" fill="#111"/></svg>
<!-- canvas -->
<svg id="cv" class="a" style="left:95px;top:170px;background:#000" width="1044" height="562" viewBox="0 0 1044 562">
<line x1="95.5" y1="0" x2="95.5" y2="562" stroke="#252525" stroke-width="1"/>
<line x1="381.5" y1="0" x2="381.5" y2="562" stroke="#252525" stroke-width="1"/>
<line x1="666.5" y1="0" x2="666.5" y2="562" stroke="#252525" stroke-width="1"/>
<line x1="951.5" y1="0" x2="951.5" y2="562" stroke="#252525" stroke-width="1"/>
<line x1="0" y1="242.5" x2="1044" y2="242.5" stroke="#252525" stroke-width="1"/>
<line x1="0" y1="528.5" x2="1044" y2="528.5" stroke="#252525" stroke-width="1"/>
<path d="M10 556.5h1 M10 528.5h1 M10 499.5h1 M10 470.5h1 M10 442.5h1 M10 413.5h1 M10 385.5h1 M10 356.5h1 M10 328.5h1 M10 299.5h1 M10 271.5h1 M10 242.5h1 M10 214.5h1 M10 185.5h1 M10 157.5h1 M10 128.5h1 M10 100.5h1 M10 71.5h1 M10 43.5h1 M10 14.5h1 M38 556.5h1 M38 528.5h1 M38 499.5h1 M38 470.5h1 M38 442.5h1 M38 413.5h1 M38 385.5h1 M38 356.5h1 M38 328.5h1 M38 299.5h1 M38 271.5h1 M38 242.5h1 M38 214.5h1 M38 185.5h1 M38 157.5h1 M38 128.5h1 M38 100.5h1 M38 71.5h1 M38 43.5h1 M38 14.5h1 M67 556.5h1 M67 528.5h1 M67 499.5h1 M67 470.5h1 M67 442.5h1 M67 413.5h1 M67 385.5h1 M67 356.5h1 M67 328.5h1 M67 299.5h1 M67 271.5h1 M67 242.5h1 M67 214.5h1 M67 185.5h1 M67 157.5h1 M67 128.5h1 M67 100.5h1 M67 71.5h1 M67 43.5h1 M67 14.5h1 M95 556.5h1 M95 528.5h1 M95 499.5h1 M95 470.5h1 M95 442.5h1 M95 413.5h1 M95 385.5h1 M95 356.5h1 M95 328.5h1 M95 299.5h1 M95 271.5h1 M95 242.5h1 M95 214.5h1 M95 185.5h1 M95 157.5h1 M95 128.5h1 M95 100.5h1 M95 71.5h1 M95 43.5h1 M95 14.5h1 M124 556.5h1 M124 528.5h1 M124 499.5h1 M124 470.5h1 M124 442.5h1 M124 413.5h1 M124 385.5h1 M124 356.5h1 M124 328.5h1 M124 299.5h1 M124 271.5h1 M124 242.5h1 M124 214.5h1 M124 185.5h1 M124 157.5h1 M124 128.5h1 M124 100.5h1 M124 71.5h1 M124 43.5h1 M124 14.5h1 M153 556.5h1 M153 528.5h1 M153 499.5h1 M153 470.5h1 M153 442.5h1 M153 413.5h1 M153 385.5h1 M153 356.5h1 M153 328.5h1 M153 299.5h1 M153 271.5h1 M153 242.5h1 M153 214.5h1 M153 185.5h1 M153 157.5h1 M153 128.5h1 M153 100.5h1 M153 71.5h1 M153 43.5h1 M153 14.5h1 M181 556.5h1 M181 528.5h1 M181 499.5h1 M181 470.5h1 M181 442.5h1 M181 413.5h1 M181 385.5h1 M181 356.5h1 M181 328.5h1 M181 299.5h1 M181 271.5h1 M181 242.5h1 M181 214.5h1 M181 185.5h1 M181 157.5h1 M181 128.5h1 M181 100.5h1 M181 71.5h1 M181 43.5h1 M181 14.5h1 M210 556.5h1 M210 528.5h1 M210 499.5h1 M210 470.5h1 M210 442.5h1 M210 413.5h1 M210 385.5h1 M210 356.5h1 M210 328.5h1 M210 299.5h1 M210 271.5h1 M210 242.5h1 M210 214.5h1 M210 185.5h1 M210 157.5h1 M210 128.5h1 M210 100.5h1 M210 71.5h1 M210 43.5h1 M210 14.5h1 M238 556.5h1 M238 528.5h1 M238 499.5h1 M238 470.5h1 M238 442.5h1 M238 413.5h1 M238 385.5h1 M238 356.5h1 M238 328.5h1 M238 299.5h1 M238 271.5h1 M238 242.5h1 M238 214.5h1 M238 185.5h1 M238 157.5h1 M238 128.5h1 M238 100.5h1 M238 71.5h1 M238 43.5h1 M238 14.5h1 M267 556.5h1 M267 528.5h1 M267 499.5h1 M267 470.5h1 M267 442.5h1 M267 413.5h1 M267 385.5h1 M267 356.5h1 M267 328.5h1 M267 299.5h1 M267 271.5h1 M267 242.5h1 M267 214.5h1 M267 185.5h1 M267 157.5h1 M267 128.5h1 M267 100.5h1 M267 71.5h1 M267 43.5h1 M267 14.5h1 M295 556.5h1 M295 528.5h1 M295 499.5h1 M295 470.5h1 M295 442.5h1 M295 413.5h1 M295 385.5h1 M295 356.5h1 M295 328.5h1 M295 299.5h1 M295 271.5h1 M295 242.5h1 M295 214.5h1 M295 185.5h1 M295 157.5h1 M295 128.5h1 M295 100.5h1 M295 71.5h1 M295 43.5h1 M295 14.5h1 M324 556.5h1 M324 528.5h1 M324 499.5h1 M324 470.5h1 M324 442.5h1 M324 413.5h1 M324 385.5h1 M324 356.5h1 M324 328.5h1 M324 299.5h1 M324 271.5h1 M324 242.5h1 M324 214.5h1 M324 185.5h1 M324 157.5h1 M324 128.5h1 M324 100.5h1 M324 71.5h1 M324 43.5h1 M324 14.5h1 M352 556.5h1 M352 528.5h1 M352 499.5h1 M352 470.5h1 M352 442.5h1 M352 413.5h1 M352 385.5h1 M352 356.5h1 M352 328.5h1 M352 299.5h1 M352 271.5h1 M352 242.5h1 M352 214.5h1 M352 185.5h1 M352 157.5h1 M352 128.5h1 M352 100.5h1 M352 71.5h1 M352 43.5h1 M352 14.5h1 M381 556.5h1 M381 528.5h1 M381 499.5h1 M381 470.5h1 M381 442.5h1 M381 413.5h1 M381 385.5h1 M381 356.5h1 M381 328.5h1 M381 299.5h1 M381 271.5h1 M381 242.5h1 M381 214.5h1 M381 185.5h1 M381 157.5h1 M381 128.5h1 M381 100.5h1 M381 71.5h1 M381 43.5h1 M381 14.5h1 M409 556.5h1 M409 528.5h1 M409 499.5h1 M409 470.5h1 M409 442.5h1 M409 413.5h1 M409 385.5h1 M409 356.5h1 M409 328.5h1 M409 299.5h1 M409 271.5h1 M409 242.5h1 M409 214.5h1 M409 185.5h1 M409 157.5h1 M409 128.5h1 M409 100.5h1 M409 71.5h1 M409 43.5h1 M409 14.5h1 M438 556.5h1 M438 528.5h1 M438 499.5h1 M438 470.5h1 M438 442.5h1 M438 413.5h1 M438 385.5h1 M438 356.5h1 M438 328.5h1 M438 299.5h1 M438 271.5h1 M438 242.5h1 M438 214.5h1 M438 185.5h1 M438 157.5h1 M438 128.5h1 M438 100.5h1 M438 71.5h1 M438 43.5h1 M438 14.5h1 M466 556.5h1 M466 528.5h1 M466 499.5h1 M466 470.5h1 M466 442.5h1 M466 413.5h1 M466 385.5h1 M466 356.5h1 M466 328.5h1 M466 299.5h1 M466 271.5h1 M466 242.5h1 M466 214.5h1 M466 185.5h1 M466 157.5h1 M466 128.5h1 M466 100.5h1 M466 71.5h1 M466 43.5h1 M466 14.5h1 M495 556.5h1 M495 528.5h1 M495 499.5h1 M495 470.5h1 M495 442.5h1 M495 413.5h1 M495 385.5h1 M495 356.5h1 M495 328.5h1 M495 299.5h1 M495 271.5h1 M495 242.5h1 M495 214.5h1 M495 185.5h1 M495 157.5h1 M495 128.5h1 M495 100.5h1 M495 71.5h1 M495 43.5h1 M495 14.5h1 M523 556.5h1 M523 528.5h1 M523 499.5h1 M523 470.5h1 M523 442.5h1 M523 413.5h1 M523 385.5h1 M523 356.5h1 M523 328.5h1 M523 299.5h1 M523 271.5h1 M523 242.5h1 M523 214.5h1 M523 185.5h1 M523 157.5h1 M523 128.5h1 M523 100.5h1 M523 71.5h1 M523 43.5h1 M523 14.5h1 M552 556.5h1 M552 528.5h1 M552 499.5h1 M552 470.5h1 M552 442.5h1 M552 413.5h1 M552 385.5h1 M552 356.5h1 M552 328.5h1 M552 299.5h1 M552 271.5h1 M552 242.5h1 M552 214.5h1 M552 185.5h1 M552 157.5h1 M552 128.5h1 M552 100.5h1 M552 71.5h1 M552 43.5h1 M552 14.5h1 M581 556.5h1 M581 528.5h1 M581 499.5h1 M581 470.5h1 M581 442.5h1 M581 413.5h1 M581 385.5h1 M581 356.5h1 M581 328.5h1 M581 299.5h1 M581 271.5h1 M581 242.5h1 M581 214.5h1 M581 185.5h1 M581 157.5h1 M581 128.5h1 M581 100.5h1 M581 71.5h1 M581 43.5h1 M581 14.5h1 M609 556.5h1 M609 528.5h1 M609 499.5h1 M609 470.5h1 M609 442.5h1 M609 413.5h1 M609 385.5h1 M609 356.5h1 M609 328.5h1 M609 299.5h1 M609 271.5h1 M609 242.5h1 M609 214.5h1 M609 185.5h1 M609 157.5h1 M609 128.5h1 M609 100.5h1 M609 71.5h1 M609 43.5h1 M609 14.5h1 M638 556.5h1 M638 528.5h1 M638 499.5h1 M638 470.5h1 M638 442.5h1 M638 413.5h1 M638 385.5h1 M638 356.5h1 M638 328.5h1 M638 299.5h1 M638 271.5h1 M638 242.5h1 M638 214.5h1 M638 185.5h1 M638 157.5h1 M638 128.5h1 M638 100.5h1 M638 71.5h1 M638 43.5h1 M638 14.5h1 M666 556.5h1 M666 528.5h1 M666 499.5h1 M666 470.5h1 M666 442.5h1 M666 413.5h1 M666 385.5h1 M666 356.5h1 M666 328.5h1 M666 299.5h1 M666 271.5h1 M666 242.5h1 M666 214.5h1 M666 185.5h1 M666 157.5h1 M666 128.5h1 M666 100.5h1 M666 71.5h1 M666 43.5h1 M666 14.5h1 M695 556.5h1 M695 528.5h1 M695 499.5h1 M695 470.5h1 M695 442.5h1 M695 413.5h1 M695 385.5h1 M695 356.5h1 M695 328.5h1 M695 299.5h1 M695 271.5h1 M695 242.5h1 M695 214.5h1 M695 185.5h1 M695 157.5h1 M695 128.5h1 M695 100.5h1 M695 71.5h1 M695 43.5h1 M695 14.5h1 M723 556.5h1 M723 528.5h1 M723 499.5h1 M723 470.5h1 M723 442.5h1 M723 413.5h1 M723 385.5h1 M723 356.5h1 M723 328.5h1 M723 299.5h1 M723 271.5h1 M723 242.5h1 M723 214.5h1 M723 185.5h1 M723 157.5h1 M723 128.5h1 M723 100.5h1 M723 71.5h1 M723 43.5h1 M723 14.5h1 M752 556.5h1 M752 528.5h1 M752 499.5h1 M752 470.5h1 M752 442.5h1 M752 413.5h1 M752 385.5h1 M752 356.5h1 M752 328.5h1 M752 299.5h1 M752 271.5h1 M752 242.5h1 M752 214.5h1 M752 185.5h1 M752 157.5h1 M752 128.5h1 M752 100.5h1 M752 71.5h1 M752 43.5h1 M752 14.5h1 M780 556.5h1 M780 528.5h1 M780 499.5h1 M780 470.5h1 M780 442.5h1 M780 413.5h1 M780 385.5h1 M780 356.5h1 M780 328.5h1 M780 299.5h1 M780 271.5h1 M780 242.5h1 M780 214.5h1 M780 185.5h1 M780 157.5h1 M780 128.5h1 M780 100.5h1 M780 71.5h1 M780 43.5h1 M780 14.5h1 M809 556.5h1 M809 528.5h1 M809 499.5h1 M809 470.5h1 M809 442.5h1 M809 413.5h1 M809 385.5h1 M809 356.5h1 M809 328.5h1 M809 299.5h1 M809 271.5h1 M809 242.5h1 M809 214.5h1 M809 185.5h1 M809 157.5h1 M809 128.5h1 M809 100.5h1 M809 71.5h1 M809 43.5h1 M809 14.5h1 M837 556.5h1 M837 528.5h1 M837 499.5h1 M837 470.5h1 M837 442.5h1 M837 413.5h1 M837 385.5h1 M837 356.5h1 M837 328.5h1 M837 299.5h1 M837 271.5h1 M837 242.5h1 M837 214.5h1 M837 185.5h1 M837 157.5h1 M837 128.5h1 M837 100.5h1 M837 71.5h1 M837 43.5h1 M837 14.5h1 M866 556.5h1 M866 528.5h1 M866 499.5h1 M866 470.5h1 M866 442.5h1 M866 413.5h1 M866 385.5h1 M866 356.5h1 M866 328.5h1 M866 299.5h1 M866 271.5h1 M866 242.5h1 M866 214.5h1 M866 185.5h1 M866 157.5h1 M866 128.5h1 M866 100.5h1 M866 71.5h1 M866 43.5h1 M866 14.5h1 M894 556.5h1 M894 528.5h1 M894 499.5h1 M894 470.5h1 M894 442.5h1 M894 413.5h1 M894 385.5h1 M894 356.5h1 M894 328.5h1 M894 299.5h1 M894 271.5h1 M894 242.5h1 M894 214.5h1 M894 185.5h1 M894 157.5h1 M894 128.5h1 M894 100.5h1 M894 71.5h1 M894 43.5h1 M894 14.5h1 M923 556.5h1 M923 528.5h1 M923 499.5h1 M923 470.5h1 M923 442.5h1 M923 413.5h1 M923 385.5h1 M923 356.5h1 M923 328.5h1 M923 299.5h1 M923 271.5h1 M923 242.5h1 M923 214.5h1 M923 185.5h1 M923 157.5h1 M923 128.5h1 M923 100.5h1 M923 71.5h1 M923 43.5h1 M923 14.5h1 M951 556.5h1 M951 528.5h1 M951 499.5h1 M951 470.5h1 M951 442.5h1 M951 413.5h1 M951 385.5h1 M951 356.5h1 M951 328.5h1 M951 299.5h1 M951 271.5h1 M951 242.5h1 M951 214.5h1 M951 185.5h1 M951 157.5h1 M951 128.5h1 M951 100.5h1 M951 71.5h1 M951 43.5h1 M951 14.5h1 M980 556.5h1 M980 528.5h1 M980 499.5h1 M980 470.5h1 M980 442.5h1 M980 413.5h1 M980 385.5h1 M980 356.5h1 M980 328.5h1 M980 299.5h1 M980 271.5h1 M980 242.5h1 M980 214.5h1 M980 185.5h1 M980 157.5h1 M980 128.5h1 M980 100.5h1 M980 71.5h1 M980 43.5h1 M980 14.5h1 M1008 556.5h1 M1008 528.5h1 M1008 499.5h1 M1008 470.5h1 M1008 442.5h1 M1008 413.5h1 M1008 385.5h1 M1008 356.5h1 M1008 328.5h1 M1008 299.5h1 M1008 271.5h1 M1008 242.5h1 M1008 214.5h1 M1008 185.5h1 M1008 157.5h1 M1008 128.5h1 M1008 100.5h1 M1008 71.5h1 M1008 43.5h1 M1008 14.5h1 M1037 556.5h1 M1037 528.5h1 M1037 499.5h1 M1037 470.5h1 M1037 442.5h1 M1037 413.5h1 M1037 385.5h1 M1037 356.5h1 M1037 328.5h1 M1037 299.5h1 M1037 271.5h1 M1037 242.5h1 M1037 214.5h1 M1037 185.5h1 M1037 157.5h1 M1037 128.5h1 M1037 100.5h1 M1037 71.5h1 M1037 43.5h1 M1037 14.5h1" stroke="#5a5a5a" stroke-width="1"/>
<g transform="translate(-95,-170)" fill="none" stroke-width="1" stroke-linejoin="round">
<g stroke="#d4d4d4">
<!-- top-left block -->
<path d="M332.8 290.4L342.3 291.9L350.4 292.1L350.4 286.5L359.4 286.8L369.8 288.5"/>
<path d="M359.4 286.8L361.3 270.3"/>
<path d="M332.8 298L339 298.2L337.6 308.4L332.8 308.4"/>
<path d="M337.6 308.4L346.6 309.4L389.2 314.1L389.7 313.2L421.9 316.8L410.1 351.1L395.4 391.9L393 397.5"/>
<path d="M346.6 309.4L347.5 299.4L435.2 309.2Q440.4 312.2 440.9 318.9"/>
<path d="M398.2 346.4L410.1 350.6L395.9 390L384 385.2Z"/>
<path d="M384.5 354.9L407.2 357.7M384.5 354.9L381.2 385.2M390.2 368.6L402.5 372.9M409.1 354.4L416.7 360.6"/>
<path d="M332.8 379.1L381.2 385.2"/>
<path d="M349 407L392.5 411.3M349 407L348 415"/>
<!-- right of road top -->
<path d="M455 335L450.4 340.7L437.6 345.9L430.5 356.8"/>
<path d="M455 354.4L448.9 353.5L447.5 363.4L445.1 364.4L442.8 378.6L455 381"/>
<path d="M442.8 378.6L433.8 377.6L431 414.6"/>
<path d="M430.5 392.8L425.2 392.3L422.4 415"/>
<path d="M484.1 280.5L497.4 281.4L492.6 317.9L478.9 317"/>
<path d="M485.1 289.5L496 290.4M481.7 306.1L493.1 307.5"/>
<path d="M510.7 270.1L510.2 273.8L573.7 281.9M496.9 270.5L504.5 271"/>
<path d="M509.7 280.5L573.7 289M509.7 280.5L507.3 301.8L566.1 308.9L567 310.3L573.7 310.8"/>
<path d="M505 307L573.7 316.5M505 307L503.1 319.3"/>
<path d="M536.2 327.4L573.7 331.7M536.2 327.4L534.3 342"/>
<path d="M472.7 317L471.3 334.5L535.3 341.6L573.7 346.8M535.3 335L534.3 341.6"/>
<path d="M450 342L453.8 335.4L462.3 336.4L460.4 354.9"/>
<path d="M468 337.4L558 347.8L557.1 354.4L573.7 356.3M468 337.4L465.2 355.4"/>
<path d="M462 342L467 339.5M461.6 346L466.6 343.5M461.2 350L466.2 347.5M460.8 354L465.8 351.5" stroke-width="0.8"/>
<path d="M450 354.4L485.5 358.2L482.2 384.3"/>
<path d="M437.6 345.9L444 341.5L450 342"/>
<path d="M412 423.7L450 426.6L573.7 442.7"/>
<path d="M450 380.5L573.7 394.7"/>
<path d="M517.3 362L554.7 366.3L550.9 392.8M517.3 362L515.9 372.4L514.4 372.9L512.5 387.1"/>
<path d="M476.5 384.3L476.1 394.7L472.7 431.3M476.1 389.5L491.7 390.9L490.8 399.4L484.6 398.5L480.8 431.3M476.1 394.7L481.3 395.7L478.4 415"/>
<path d="M503.1 386.6L499.8 413.7M495.5 400.4L500.7 401.3M495.5 400.4L491.7 424.2L500.2 425.6L501.6 414.7L499.8 412.8L500.2 410"/>
<path d="M545.7 392.8L541.5 429.4M545.7 397.1L561.4 399L560.4 407L554.2 406.1L549.5 410L546.2 438.9M545.2 402.3L550.5 403.2L549 415"/>
<path d="M573.2 394.7L571.3 410L568.9 433.2L561.4 432.3L563.7 410L564.2 408.4L570.4 409.4"/>
<path d="M555 403L550.5 439.4"/>
<path d="M450 420L453.8 419L472.3 421.4L470.4 429"/>
<path d="M500.2 425.6L500.2 427.1L523 429L523.4 427.5L541.5 429.4L539.6 438M516.8 429L516.3 435.1"/>
<path d="M421.9 416.2L430.9 417.1L455 421.4M422.4 410L421.9 416.2M447.5 420.4L446.6 426.6"/>
<path d="M411.5 429.4L573.7 447.4"/>
<!-- left lower -->
<path d="M349 414.3L380.2 416.6L377.4 442.7L346.1 439.4Z"/>
<path d="M354.6 440.8L354.2 447.4L368.9 448.9L369.3 442.2"/>
<path d="M377.4 442.7L376.4 451.2L397.8 453.6"/>
<path d="M406.8 462.1L421.5 463.1L421.9 466.4L486.5 469.2L488.9 483.4M442.3 467.3L440.4 492"/>
<path d="M332.8 487.3L385 495.5"/>
<path d="M332.8 498.7L383.1 507.7"/>
<path d="M405.8 485L405.8 491.2L440.9 493.1L441.8 485"/>
<path d="M404.9 495.4Q408.7 501.6 429.5 510.6"/>
<path d="M426 503.5Q423 507 427 509Q437 511 442 508Q445 505 441 503Q432 502 426 503.5Z"/>
<path d="M443.7 506.8L450 502.5L509.7 485"/>
<path d="M396.3 511.5Q427 522 436 533Q441 540 455 560"/>
<path d="M490.8 490L573.7 470.2"/>
<path d="M524.4 505.4L549 507.7L572.3 505.4L569.9 524.3L559.5 523.4L558 535.2L521.1 531Z"/>
<path d="M552.4 503.5L560.9 504.9L560.4 509.6M543.3 492.1L549 507.7M559.5 527.2L573.7 529.1"/>
<path d="M520.6 534.8L535.8 536.6L534.3 546.6L519.7 544.2Z"/>
<!-- bottom -->
<path d="M378.3 618.5L380.7 602.4L411.5 571.6L448.5 568.3L455 561.2"/>
<path d="M411.5 571.6L408.2 591L411.5 591.5"/>
<path d="M412 589.1L444.7 595.3L440.9 617.5L447.5 618.5"/>
<path d="M411.5 592.4L439.5 597.2L436.1 616.6L440.9 617.5"/>
<path d="M411.5 592.4L407.7 611.4L426.2 614.7L425.7 618.5M407.7 611.4L406.3 618.5"/>
<path d="M446.1 618L450.4 592.9Q455 583 461.4 580.6L469 582"/>
<path d="M493.1 591Q489 577.7 501.2 577.7L573.7 582.5"/>
<path d="M573.7 592.9L571.8 613.8L573.7 617.5"/>
<path d="M573.3 590L572 614.7L574 617.3L581.3 618L584 614.7L584.7 606.7M587.3 606.7L588 617.3L608.7 618.7"/>
<path d="M666.7 608.7L666 618.7M672.7 607.3L672.7 618.7M696 607.3L698.7 613.3L703.3 615.3L708 612L708.7 607.3"/>
<path d="M732 607.3L724.7 618.7M729.3 611.3L726.7 618.7M760 607.3L759.3 618.7M778 607.3L776.7 618.7M884.7 617.3L898 618.7"/>
</g>
<g stroke="#1ec4d0">
<path d="M372.2 270.3L370.3 294.2L449.9 302.8"/>
<path d="M468 270.1L449.9 302.8L431.9 335L418.1 357.7L412.4 370.1L408.7 384.3L404.9 398.5L403.4 412.8L393 490L394.4 485"/>
<path d="M453.2 318.9L443.7 335L430.5 356.8L422.4 372.9L417.2 390L413.4 410L404.9 492.6Q404.4 497 408.7 498.3"/>
<path d="M485.5 270.1L478.9 317"/>
<path d="M458.1 315.5L573.7 327.4"/>
<path d="M333.3 390.4L393 397.5L404.9 399.4L403.4 412.7L392.5 411.3L393 397.5"/>
<path d="M410.6 431.3L573.7 449.3"/>
<path d="M465.2 489.1L573.7 464.5"/>
<path d="M551.4 490L564.7 486.8L573.7 487.2"/>
<path d="M332.8 488.8L385.9 496.8Q393 495 394.4 485"/>
<path d="M332.8 499.2L383.1 508.2"/>
<path d="M386.4 496.8L439.9 498.3L485 485"/>
<path d="M420.5 498.3L455.7 534.3L467.1 555L512.5 618.5"/>
<path d="M573.7 487.8L564.7 486.9L542.9 492.1L476.5 507.7Q455.7 516.3 455.7 534.3"/>
<path d="M401.1 515.3L402.5 618.5"/>
<path d="M395.4 510.6L418.1 522.9L439 541.9L455 561.8L494.5 618.5"/>
<path d="M476.5 567.8L573.7 574.4"/>
<path d="M691.3 607.3L690 618.7M783.3 607.3L782 618.7M869.3 607.3L868 618.7"/>
</g>
<!-- selection markers -->
<path d="M449.5 312L451.5 309.8H456.5L458.5 312V318.3H449.5Z" fill="#3a9ad0" stroke="#6ab4dc" stroke-width="0.7"/><rect x="450.8" y="312.3" width="6.2" height="5.6" fill="#1a84bc"/>
<rect x="453.5" y="319.5" width="5.5" height="5.5" fill="#0a14c8"/>
<path d="M386.5 506L388.5 503.5H393L395 506V512.3H386.5Z" fill="#3a9ad0" stroke="#6ab4dc" stroke-width="0.7"/><rect x="388" y="506.3" width="5.8" height="5.6" fill="#1a84bc"/>
<rect x="383.2" y="507.3" width="5.6" height="5.7" fill="#0a14c8"/>
<g font-family="Liberation Sans" stroke="none">
<text x="460.5" y="319.3" font-size="8.4" fill="#a82222">2563284</text>
<text x="386.4" y="516.3" font-size="8.4" fill="#a82222">32562236</text>
<g fill="#d2d200" font-size="8.5">
<text x="390.7" y="408.5">1580</text>
<text x="350" y="465">2546</text>
<text x="449" y="458.3">1549</text>
<text x="489.3" y="543.8">1703</text>
<text x="465.2" y="617.6">1953</text>
<text x="550" y="608.6">555</text>
<text x="0" y="0" transform="translate(408.5,442) rotate(-90)" text-anchor="middle">60534</text>
</g>
<text x="0" y="0" transform="translate(436.5,342.5) rotate(-59)" text-anchor="middle" font-size="10" fill="#a8a8a8" letter-spacing="0.2">Exercitation</text>
<text x="0" y="0" transform="translate(489.5,606) rotate(55)" text-anchor="middle" font-size="10" fill="#a8a8a8" letter-spacing="0.3">Minim Veniam</text>
</g>
</g>

</svg>
<!-- scrollbars -->
<div class="a" style="left:1139px;top:170px;width:15px;height:562px;background:#fafafa"></div>
<div class="a" style="left:1143px;top:317px;width:8px;height:268px;border-radius:4px;background:#808080"></div>
<div class="a" style="left:95px;top:732px;width:988px;height:14px;background:#fafafa"></div>
<div class="a" style="left:214px;top:736px;width:750px;height:8px;border-radius:4px;background:#808080"></div>
<span class="t" style="left:1103px;top:734px;font-size:12.5px;color:#111">10 &lt; 100</span>
<!-- command history -->
<div class="a" style="left:72px;top:746px;width:1082px;height:3px;background:linear-gradient(#c4c4c4,#e0e0e0)"></div>
<div class="a" style="left:72px;top:749px;width:1082px;height:22px;background:#fff;border-bottom:1px solid #bdbdbd"></div>
<span class="t" style="left:77px;top:752px;font-size:13.5px;color:#1515d0"><i>Opdracht:</i> layeradd</span>
<div class="a" style="left:1139px;top:749px;width:15px;height:21px;background:#f7f7f7"></div>
<div class="a" style="left:1142px;top:750px;width:8px;height:17px;border-radius:4px;background:#808080"></div>
<span class="t" style="left:73px;top:778px;font-size:13.5px;color:#111">Opdracht:</span>
<div class="a" style="left:137px;top:776px;width:990px;height:18px;background:#fff"></div>
<div class="a" style="left:1127px;top:772px;width:26px;height:25px;border:1px solid #b8b8b8;background:linear-gradient(#f6f6f6,#e6e6e6)"></div>
<svg class="a" style="left:1132px;top:779px" width="16" height="12"><rect x="0.5" y="0.5" width="14" height="10" fill="#f4f4f4" stroke="#333"/><rect x="0" y="0" width="15" height="3" fill="#111"/></svg>

<div id="rdock" class="a"></div>
<div id="rtb" class="a"></div>
<!-- Layer panel header -->
<svg class="a" style="left:1156px;top:125px" width="36" height="17"><circle cx="8" cy="8.5" r="7" fill="#6f6f6f"/><path d="M5.2 5.7L10.8 11.3M10.8 5.7L5.2 11.3" stroke="#fff" stroke-width="1.6"/><circle cx="26" cy="8.5" r="7" fill="#6f6f6f"/><rect x="22.5" y="7.5" width="5.5" height="4.5" fill="none" stroke="#fff" stroke-width="1.1"/><path d="M24.5 7.5V5.2H30V9.8H28" fill="none" stroke="#fff" stroke-width="1.1"/></svg>
<span class="t" style="left:1297px;top:128px;font-size:12px;color:#222">Lagenlijst</span>
<!-- layer buttons -->
<div class="lbtn" style="left:1155px"><svg class="a" style="left:21px;top:6px" width="17" height="13" viewBox="0 0 17 13"><path d="M0.5 6Q2.5 0.5 8.5 0.5Q14.5 0.5 16 6Q14.5 12 8.5 12Q2.5 12 0.5 6Z" fill="#000"/><path d="M3 6Q3.5 2.5 8.5 2.5Q13.5 2.5 13.5 6Q13 10 8.5 10Q3.5 10 3 6Z" fill="#fff"/><circle cx="8.5" cy="5.3" r="3.3" fill="#000"/><path d="M7.2 4.2L8.2 5.2" stroke="#fff" stroke-width="0.8"/></svg></div>
<div class="lbtn" style="left:1215px"><svg class="a" style="left:21px;top:6px" width="17" height="13" viewBox="0 0 17 13"><path d="M0.5 6Q2.5 0.5 8.5 0.5Q14.5 0.5 16 6Q14.5 12 8.5 12Q2.5 12 0.5 6Z" fill="#a4a4a4"/><path d="M3 6Q3.5 2.5 8.5 2.5Q13.5 2.5 13.5 6Q13 10 8.5 10Q3.5 10 3 6Z" fill="#ececec"/><circle cx="8.5" cy="5.3" r="3.3" fill="#a4a4a4"/></svg></div>
<div class="a" style="left:1275px;top:145px;width:60px;height:27px;background:#b9b9b9;border-radius:5px"></div>
<svg class="a" style="left:1298px;top:151px" width="14" height="14" viewBox="0 0 14 14"><path d="M5 0.5H9V5H13.5V9H9V13.5H5V9H0.5V5H5Z" fill="#f00" stroke="#400" stroke-width="0.6"/></svg>
<div class="lbtn" style="left:1335px"><div class="a" style="left:23px;top:10px;width:13px;height:5px;background:#f00;border:0.6px solid #600"></div></div>
<div class="lbtn" style="left:1395px"><svg class="a" style="left:21px;top:4px" width="17" height="17" viewBox="0 0 17 17"><path d="M1 16L2.5 12L13 1.5Q14.5 0.5 15.5 1.5Q16.5 2.5 15.5 4L5 14.5Z" fill="#e8a838" stroke="#8a5a10" stroke-width="0.7"/><path d="M12.5 2L15 4.5" stroke="#e03030" stroke-width="2"/><path d="M1 16L2 13L4 15Z" fill="#333"/></svg></div>
<!-- list -->
<div class="a" style="left:1155px;top:172px;width:300px;height:387px;background:#fff;border:1px solid #c6c6c6"></div>
<div class="a" style="left:1156px;top:193px;width:298px;height:20px;background:#0b50da"></div>
<div class="a" style="left:1181px;top:179px;width:16px;height:9px;border:1px solid #111;background:#fff"></div>
<span class="t" style="left:1203px;top:176px;font-size:13.3px;color:#111">0</span>
<div class="a" style="left:1181px;top:199px;width:16px;height:9px;background:#343d4a"></div>
<span class="t" style="left:1203px;top:196px;font-size:13.3px;color:#fff">Kadastrale nummers</span>
<div class="a" style="left:1181px;top:219px;width:16px;height:9px;background:#000"></div>
<span class="t" style="left:1203px;top:216px;font-size:13.3px;color:#111">Tekst</span>
<svg class="a" style="left:1394px;top:195px" width="16" height="16" viewBox="0 0 17 17"><path d="M1 16L2.5 12L13 1.5Q14.5 0.5 15.5 1.5Q16.5 2.5 15.5 4L5 14.5Z" fill="#e8a838" stroke="#8a5a10" stroke-width="0.7"/><path d="M12.5 2L15 4.5" stroke="#e03030" stroke-width="2"/><path d="M1 16L2 13L4 15Z" fill="#333"/></svg>
<svg width="0" height="0" style="position:absolute"><defs><g id="eye"><path d="M0.3 5.5Q2.3 0.3 8 0.3Q13.7 0.3 15.5 5.5Q13.7 11.3 8 11.3Q2.3 11.3 0.3 5.5Z" fill="#000"/><path d="M2.8 5.5Q3.3 2.3 8 2.3Q12.7 2.3 12.9 5.5Q12.5 9.4 8 9.4Q3.3 9.4 2.8 5.5Z" fill="#fff"/><circle cx="8" cy="4.9" r="3.1" fill="#000"/><path d="M6.8 3.8L7.7 4.7" stroke="#fff" stroke-width="0.8"/></g><g id="lock"><path d="M2.5 6V4.5Q2.5 1 5.5 1Q8.5 1 8.5 4.5V6" fill="none" stroke="#b4b4b4" stroke-width="1.6"/><rect x="0.5" y="6" width="10" height="8" fill="#b4b4b4"/></g></defs></svg>
<svg class="a" style="left:1415px;top:177px" width="16" height="12"><use href="#eye"/></svg>
<svg class="a" style="left:1440px;top:176px" width="11" height="14"><use href="#lock"/></svg>
<svg class="a" style="left:1415px;top:197px" width="16" height="12"><use href="#eye"/></svg>
<svg class="a" style="left:1440px;top:196px" width="11" height="14"><use href="#lock"/></svg>
<svg class="a" style="left:1415px;top:217px" width="16" height="12"><use href="#eye"/></svg>
<svg class="a" style="left:1440px;top:216px" width="11" height="14"><use href="#lock"/></svg>
<!-- Selectiefilter -->
<svg class="a" style="left:1156px;top:561px" width="36" height="17"><circle cx="8" cy="8.5" r="7" fill="#6f6f6f"/><path d="M5.2 5.7L10.8 11.3M10.8 5.7L5.2 11.3" stroke="#fff" stroke-width="1.6"/><circle cx="26" cy="8.5" r="7" fill="#6f6f6f"/><rect x="22.5" y="7.5" width="5.5" height="4.5" fill="none" stroke="#fff" stroke-width="1.1"/><path d="M24.5 7.5V5.2H30V9.8H28" fill="none" stroke="#fff" stroke-width="1.1"/></svg>
<span class="t" style="left:1289px;top:564px;font-size:12px;color:#222">Selectiefilter</span>
<div class="a" style="left:1156px;top:579px;width:298px;height:1px;background:#cfcfcf"></div>
<div class="a" style="left:1167px;top:594px;width:276px;height:135px;background:#e5e5e5;border-top:1px solid #dedede"></div>
<span class="t" style="left:1174px;top:586px;font-size:12px;color:#222;background:#ececec;padding-right:2px">Filter</span>
<span class="t lbl" style="left:1182px;top:619px">Objecttype:</span>
<span class="t lbl" style="left:1182px;top:645px">Eigenschap:</span>
<span class="t lbl" style="left:1182px;top:671px">Vergelijking:</span>
<span class="t lbl" style="left:1182px;top:697px">Waarde:</span>
<div class="cmb" style="left:1263px;top:615px;width:165px;height:21px"><span class="t" style="left:3px;top:3px">Cirkel</span><div class="stp" style="left:145px;top:1px"><svg width="17" height="17" class="a" style="left:0;top:0"><path d="M5.5 7L8.5 4L11.5 7M5.5 10L8.5 13L11.5 10" fill="none" stroke="#fff" stroke-width="1.3"/></svg></div></div>
<div class="cmb" style="left:1263px;top:641px;width:165px;height:21px"><span class="t" style="left:3px;top:3px">Diameter</span><div class="stp" style="left:145px;top:1px"><svg width="17" height="17" class="a" style="left:0;top:0"><path d="M5.5 7L8.5 4L11.5 7M5.5 10L8.5 13L11.5 10" fill="none" stroke="#fff" stroke-width="1.3"/></svg></div></div>
<div class="cmb" style="left:1263px;top:667px;width:165px;height:21px"><span class="t" style="left:3px;top:3px">= (gelijk aan)</span><div class="stp" style="left:145px;top:1px"><svg width="17" height="17" class="a" style="left:0;top:0"><path d="M5.5 7L8.5 4L11.5 7M5.5 10L8.5 13L11.5 10" fill="none" stroke="#fff" stroke-width="1.3"/></svg></div></div>
<div class="a" style="left:1264px;top:693px;width:163px;height:20px;background:#fff;border-bottom:1px solid #c8c8c8"><span class="t" style="left:2px;top:3px;font-size:13.3px;color:#111">1</span></div>
<div class="sbtn" style="left:1167px"><svg class="a" style="left:25px;top:5px" width="16" height="16"><rect x="1.5" y="1.5" width="12" height="12" fill="#f88a8a" stroke="#666" stroke-width="0.7" stroke-dasharray="1.5 1"/></svg></div>
<div class="sbtn" style="left:1236px"><svg class="a" style="left:25px;top:5px" width="16" height="16"><rect x="1" y="1" width="9" height="9" rx="1.5" fill="#f88a8a" stroke="#666" stroke-width="0.8"/><rect x="5" y="5" width="9" height="9" fill="#f88a8a" stroke="#666" stroke-width="0.7" stroke-dasharray="1.5 1"/></svg></div>
<div class="sbtn" style="left:1305px"><svg class="a" style="left:25px;top:5px" width="16" height="16"><rect x="1" y="1" width="9" height="9" rx="1.5" fill="#f88a8a" stroke="#666" stroke-width="0.8"/><rect x="5" y="5" width="9" height="9" fill="#fff" stroke="#666" stroke-width="0.7" stroke-dasharray="1.5 1"/></svg></div>
<div class="sbtn" style="left:1374px"><svg class="a" style="left:25px;top:5px" width="16" height="16"><rect x="1" y="1" width="9" height="9" rx="1.5" fill="#fff" stroke="#666" stroke-width="0.8"/><rect x="5" y="5" width="9" height="9" fill="#fff" stroke="#666" stroke-width="0.7" stroke-dasharray="1.5 1"/><rect x="5" y="5" width="5" height="5" fill="#f88a8a"/></svg></div>
<!-- right toolbar -->
<div class="a" style="left:1462px;top:131px;width:27px;height:2px;background:linear-gradient(90deg,#acacac 2px,transparent 2px) 0 0/6px 2px"></div>
<div class="a" style="left:1456px;top:135px;width:43px;height:42px;background:#b9b9b9;border-radius:6px"></div>
<div class="a" style="left:1456px;top:330px;width:43px;height:43px;background:#b9b9b9;border-radius:6px"></div>
<div class="a" style="left:1456px;top:433px;width:43px;height:43px;background:#b9b9b9;border-radius:6px"></div>
<svg width="0" height="0" style="position:absolute"><defs><g id="win"><rect x="0.5" y="0.5" width="27" height="27" fill="#fff" stroke="#222"/><rect x="0" y="0" width="28" height="5" fill="#000"/><rect x="1.5" y="1" width="3" height="3" fill="#fff"/></g></defs></svg>
<svg class="a" style="left:1463px;top:142px" width="28" height="28"><use href="#win"/><path d="M8 12L17 9V21L8 24Z" fill="#888" stroke="#333" stroke-width="0.8"/><path d="M11 11L20 8V20L11 23Z" fill="#fff" stroke="#333" stroke-width="0.8"/><path d="M14 19L18 12L17 19Z" fill="none" stroke="#e03030" stroke-width="0.8"/></svg>
<svg class="a" style="left:1463px;top:189px" width="28" height="28"><use href="#win"/><rect x="6.5" y="10.5" width="11" height="9" fill="#fdf0c8" stroke="#333" stroke-width="0.8"/><circle cx="15.5" cy="18.5" r="5" fill="#fdf0c8" fill-opacity="0.8" stroke="#333" stroke-width="0.8"/></svg>
<svg class="a" style="left:1463px;top:235px" width="28" height="28"><use href="#win"/><rect x="5.5" y="10.5" width="17" height="11" rx="2" fill="#f4f6fa" stroke="#b8c8e0" stroke-width="0.9"/></svg>
<div class="a" style="left:1456px;top:275px;width:43px;height:1px;background:linear-gradient(90deg,#707070 50%,transparent 50%) 0 0/3px 1px"></div>
<svg class="a" style="left:1463px;top:290px" width="28" height="28"><use href="#win"/><g fill="#000"><rect x="5" y="9" width="4" height="3"/><rect x="5" y="15" width="4" height="3"/><rect x="5" y="21" width="4" height="3"/></g><g fill="none" stroke="#333" stroke-width="0.8"><rect x="11.5" y="9.5" width="13" height="3"/><rect x="11.5" y="15.5" width="13" height="3"/><rect x="11.5" y="21.5" width="13" height="3"/></g></svg>
<svg class="a" style="left:1463px;top:337px" width="28" height="28"><use href="#win"/><path d="M8 11Q14 8 20 11L15.5 16V23L12.5 21V16Z" fill="#a8a8a8" stroke="#333" stroke-width="0.8"/><ellipse cx="14" cy="11" rx="6" ry="1.6" fill="#ddd" stroke="#333" stroke-width="0.6"/></svg>
<svg class="a" style="left:1463px;top:384px" width="28" height="28"><use href="#win"/><path d="M6 9L11 12V20L6 23Z" fill="#fff" stroke="#333" stroke-width="0.8"/><rect x="11" y="12" width="11" height="8" fill="#888" stroke="#333" stroke-width="0.6"/><path d="M3 16H26" stroke="#f08080" stroke-width="0.6"/></svg>
<div class="a" style="left:1456px;top:425px;width:43px;height:1px;background:linear-gradient(90deg,#707070 50%,transparent 50%) 0 0/3px 1px"></div>
<svg class="a" style="left:1463px;top:440px" width="28" height="28"><use href="#win"/><path d="M3 9H14M3 12H13M3 15H14M3 18H15" stroke="#999" stroke-width="0.7"/><rect x="1" y="23" width="26" height="4" fill="#fff" stroke="#333" stroke-width="0.6"/><path d="M10 25H25" stroke="#666" stroke-width="0.8"/></svg>
<svg class="a" style="left:1463px;top:487px" width="28" height="28"><use href="#win"/><rect x="7.5" y="9.5" width="13" height="15" fill="#c08a48" stroke="#8a5a20" stroke-width="0.7"/><rect x="9.5" y="11.5" width="9" height="11" fill="#f4f4f4"/><rect x="11" y="8.5" width="6" height="3" fill="#999"/></svg>
<div class="a" style="left:1456px;top:528px;width:43px;height:1px;background:linear-gradient(90deg,#707070 50%,transparent 50%) 0 0/3px 1px"></div>
<svg class="a" style="left:1463px;top:546px" width="30" height="22" viewBox="0 0 30 22"><path d="M2 3H8.5Q12.3 3 12.3 6.5Q12.3 10.2 8.5 10.2H4.8M8.5 10.2Q12.5 10.2 12.5 14.8Q12.5 19.2 8.5 19.2H2M16 3V19.2H20Q26.8 19.2 26.8 11.1Q26.8 3 20 3Z" fill="none" stroke="#111" stroke-width="1.9"/></svg>

<div id="status" class="a"></div>
<!-- status bar -->
<span class="t st" style="left:2px;top:808px">391.2815,263.0916</span>
<span class="t st" style="left:2px;top:828px">@391.2815,263.0916</span>
<div class="a" style="left:253px;top:802px;width:1px;height:40px;background:#8c8c8c"></div>
<span class="t st" style="left:256px;top:808px">471.5065&lt;34°</span>
<span class="t st" style="left:256px;top:828px">@471.5065&lt;34°</span>
<div class="a" style="left:506px;top:819px;width:6px;height:6px;border-radius:3px;background:#c6c6c6"></div>
<span class="t st" style="left:573px;top:818px;letter-spacing:0.07px">Object of gebied selecteren</span>
<svg class="a" style="left:716px;top:805px" width="20" height="32" viewBox="0 0 20 32"><path d="M10 1Q18.5 1 18.5 10V22Q18.5 30.5 10 30.5Q1.5 30.5 1.5 22V10Q1.5 1 10 1Z" fill="#fff" stroke="#333" stroke-width="0.9"/><path d="M1.5 13Q10 10 18.5 13" fill="none" stroke="#333" stroke-width="0.9"/><rect x="8.2" y="3" width="3.6" height="7" rx="1.8" fill="#fff" stroke="#333" stroke-width="0.8"/><path d="M10 1V3M10 10V12" stroke="#333" stroke-width="0.8"/></svg>
<div class="a" style="left:940px;top:819px;width:6px;height:6px;border-radius:3px;background:#c6c6c6"></div>
<span class="t st" style="left:949px;top:812px">Geselecteerde objecten:</span>
<span class="t st" style="left:949px;top:823px">10 objecten op 2 laagen.</span>
<div class="a" style="left:1269px;top:819px;width:6px;height:6px;border-radius:3px;background:#c6c6c6"></div>
<!-- dialog -->
<div class="a" style="left:573px;top:235px;width:352px;height:371px;background:#ececec;border:3px solid #acacac;border-bottom-width:4px;border-radius:3px;box-shadow:inset 1px 1px 0 #d4d4d4"></div>
<span class="t dl" style="left:595px;top:262px">Bovenliggende laag:</span>
<div class="cmb" style="left:724px;top:257px;width:179px;height:22px"><div class="stp" style="left:160px;top:2px;width:16px;height:16px"><svg width="16" height="16" class="a" style="left:0;top:0"><path d="M5 6.5L8 3.5L11 6.5M5 9.5L8 12.5L11 9.5" fill="none" stroke="#fff" stroke-width="1.3"/></svg></div></div>
<span class="t dl" style="left:595px;top:293px">Laagnaam:</span>
<div class="a" style="left:724px;top:290px;width:179px;height:20px;background:#fff;border-bottom:1px solid #c6c6c6;border-top:1px solid #e0e0e0"></div>
<span class="t dl" style="left:726px;top:294px">Referentiepunten</span>
<div class="a" style="left:595px;top:325px;width:309px;height:167px;background:#e5e5e5;border-top:1px solid #dadada"></div>
<span class="t" style="left:601px;top:316px;font-size:12px;color:#222;padding:0 1px">Attributen</span>
<span class="t dl" style="left:600px;top:349px;width:81px;text-align:right">Kleur:</span>
<span class="t dl" style="left:600px;top:380px;width:81px;text-align:right">Lijndikte:</span>
<span class="t dl" style="left:600px;top:412px;width:81px;text-align:right">Lijntype:</span>
<div class="cmb" style="left:689px;top:344px;width:199px;height:22px"><div class="a" style="left:3px;top:5px;width:17px;height:10px;background:#000"></div><span class="t dl" style="left:25px;top:4px">Zwart</span><div class="stp" style="left:180px;top:2px;width:16px;height:16px"><svg width="16" height="16" class="a" style="left:0;top:0"><path d="M5 6.5L8 3.5L11 6.5M5 9.5L8 12.5L11 9.5" fill="none" stroke="#fff" stroke-width="1.3"/></svg></div></div>
<div class="cmb" style="left:689px;top:376px;width:199px;height:22px"><div class="a" style="left:3px;top:9px;width:17px;height:1.2px;background:#222"></div><span class="t dl" style="left:25px;top:4px">0.25mm (ISO)</span><div class="stp" style="left:180px;top:2px;width:16px;height:16px"><svg width="16" height="16" class="a" style="left:0;top:0"><path d="M5 6.5L8 3.5L11 6.5M5 9.5L8 12.5L11 9.5" fill="none" stroke="#fff" stroke-width="1.3"/></svg></div></div>
<div class="cmb" style="left:689px;top:408px;width:199px;height:22px"><span class="t dl" style="left:2px;top:3px">Doorlopend</span><div class="stp" style="left:180px;top:2px;width:16px;height:16px"><svg width="16" height="16" class="a" style="left:0;top:0"><path d="M5 6.5L8 3.5L11 6.5M5 9.5L8 12.5L11 9.5" fill="none" stroke="#fff" stroke-width="1.3"/></svg></div></div>
<div class="chk" style="left:610px;top:440px"><svg width="14" height="14"><path d="M3.3 7.2L6 10L10.8 3.6" fill="none" stroke="#fff" stroke-width="1.9" stroke-linecap="round" stroke-linejoin="round"/></svg></div>
<span class="t dl" style="left:628px;top:441px">Plotbaar</span>
<div class="chk" style="left:610px;top:463px"><svg width="14" height="14"><path d="M3.3 7.2L6 10L10.8 3.6" fill="none" stroke="#fff" stroke-width="1.9" stroke-linecap="round" stroke-linejoin="round"/></svg></div>
<span class="t dl" style="left:628px;top:464px">Snapbaar</span>
<div class="chk" style="left:595px;top:507px"><svg width="14" height="14"><path d="M3.3 7.2L6 10L10.8 3.6" fill="none" stroke="#fff" stroke-width="1.9" stroke-linecap="round" stroke-linejoin="round"/></svg></div>
<span class="t dl" style="left:613px;top:508px">Verplaats selectie naar de nieuwe laag</span>
<div class="a" style="left:738px;top:567px;width:82px;height:20px;background:#fff;border-radius:5px;box-shadow:0 0 0 0.5px rgba(0,0,0,0.18),0 1px 1px rgba(0,0,0,0.12)"></div>
<span class="t dl" style="left:738px;top:571px;width:82px;text-align:center">Annuleer</span>
<div class="a" style="left:836px;top:567px;width:67px;height:20px;background:linear-gradient(#3592fa,#0d72f2);border-radius:5px;box-shadow:0 1px 1px rgba(0,0,0,0.15)"></div>
<span class="t dl" style="left:836px;top:571px;width:67px;text-align:center;color:#fff">OK</span>
<!-- click ring + cursor -->
<svg class="a" style="left:708px;top:469px" width="90" height="90" viewBox="0 0 90 90"><defs><radialGradient id="ring" cx="0.5" cy="0.5" r="0.5"><stop offset="0" stop-color="#fff" stop-opacity="0"/><stop offset="0.6" stop-color="#fff" stop-opacity="0.08"/><stop offset="0.74" stop-color="#fff" stop-opacity="0.3"/><stop offset="0.8" stop-color="#c4d2e0" stop-opacity="0.35"/><stop offset="0.9" stop-color="#a8bccf" stop-opacity="0.6"/><stop offset="0.96" stop-color="#9fb4c9" stop-opacity="0.75"/><stop offset="1" stop-color="#9fb4c9" stop-opacity="0.15"/></radialGradient></defs><circle cx="44.7" cy="45" r="39.5" fill="url(#ring)"/></svg>
<svg class="a" style="left:752px;top:513px" width="22" height="31" viewBox="0 0 20 28"><path d="M1.2 1.2V21L6 16.5L9.8 25L13 23.6L9.2 15.2H15.6Z" fill="#fff" stroke="#111" stroke-width="1.2" stroke-linejoin="round"/></svg>

</body></html>
